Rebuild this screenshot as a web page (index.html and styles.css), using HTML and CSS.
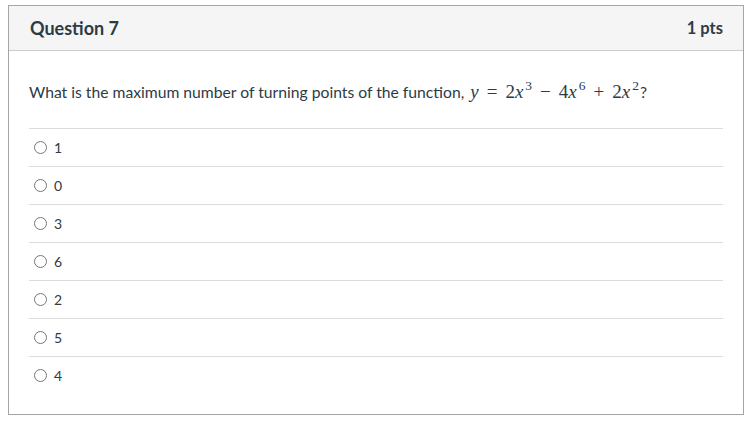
FILE: index.html
```html
<!DOCTYPE html>
<html>
<head>
<meta charset="utf-8">
<link rel="stylesheet" href="styles.css">
</head>
<body>
<div class="question">
  <div class="header">
    <span class="title">Question 7</span>
    <span class="pts">1 pts</span>
  </div>
  <div class="body">
    <p class="text">What is the maximum number of turning points of the function, <span class="math"><i>y</i><span class="op">=</span>2<i>x</i><sup>3</sup><span class="op">−</span>4<i>x</i><sup>6</sup><span class="op">+</span>2<i>x</i><sup>2</sup></span>?</p>
    <div class="answers">
      <label class="answer"><span class="radio"></span><span class="lbl">1</span></label>
      <label class="answer"><span class="radio"></span><span class="lbl">0</span></label>
      <label class="answer"><span class="radio"></span><span class="lbl">3</span></label>
      <label class="answer"><span class="radio"></span><span class="lbl">6</span></label>
      <label class="answer"><span class="radio"></span><span class="lbl">2</span></label>
      <label class="answer"><span class="radio"></span><span class="lbl">5</span></label>
      <label class="answer"><span class="radio"></span><span class="lbl">4</span></label>
    </div>
  </div>
</div>
</body>
</html>
```
FILE: styles.css
```css
html, body { margin: 0; padding: 0; background: #fff; }
body { padding: 5px 6px 0 8px; font-family: Lato, "Liberation Sans", sans-serif; color: #2d3b45; }
.question {
  border: 1px solid #a5a5a5;
  height: 408px;
  box-sizing: content-box;
}
.header {
  background: #f5f5f5;
  border-bottom: 1px solid #c7cdd1;
  height: 44px;
  display: flex;
  align-items: center;
  justify-content: space-between;
  padding: 0 20px 0 21px;
}
.title { font-weight: 700; font-size: 18px; }
.pts { font-weight: 700; font-size: 16.5px; }
.body { padding: 0 20px 0 20px; }
.text {
  margin: 0;
  padding: 31px 0 0 0;
  height: 46px;
  font-size: 15.7px;
  border-bottom: 1px solid #dcdcdc;
  line-height: 20px;
}
.math { font-family: "Liberation Serif", "DejaVu Serif", serif; font-size: 19px; margin-left: 2px; margin-right: 1px; }
.math i { font-style: italic; }
.math sup { font-size: 13.5px; vertical-align: 8px; line-height: 0; font-style: normal; margin-left: 2px; }
.op { margin: 0 8px; }
.answer {
  display: flex;
  align-items: center;
  height: 37px;
  border-bottom: 1px solid #dcdcdc;
  font-size: 14px;
}
.answer:last-child { border-bottom: none; }
.radio {
  width: 11px; height: 11px;
  border: 1px solid #777;
  border-radius: 50%;
  margin: 0 7px 0 5px;
}
.lbl { color: #2d3b45; }
```
